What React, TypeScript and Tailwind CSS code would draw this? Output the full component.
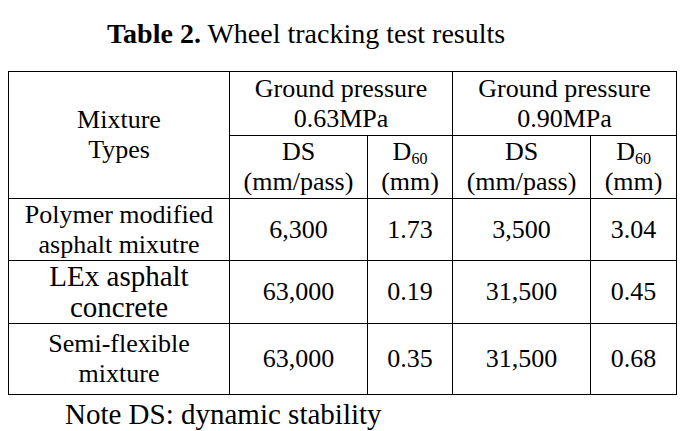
import React from "react";

const rows = [
  { name: ["Polymer modified", "asphalt mixutre"], big: false, h: "h-[62px]", v: ["6,300", "1.73", "3,500", "3.04"] },
  { name: ["LEx asphalt", "concrete"], big: true, h: "h-[61px]", v: ["63,000", "0.19", "31,500", "0.45"] },
  { name: ["Semi-flexible", "mixture"], big: false, h: "h-[71px]", v: ["63,000", "0.35", "31,500", "0.68"] },
];

const cell = "border border-black text-center align-middle p-0";

function D60() {
  return (
    <>
      D<sub className="text-[16px]">60</sub>
    </>
  );
}

export default function App() {
  return (
    <div className="w-[689px] h-[431px] bg-white text-black font-['Liberation_Serif',serif] overflow-hidden">
      <h1 className="pt-[18px] pl-[107px] text-[28px] leading-[32px] h-[71px]">
        <b>Table 2.</b> Wheel tracking test results
      </h1>
      <table className="ml-[8px] w-[668px] table-fixed text-[26px] leading-[30px]">
        <colgroup>
          <col className="w-[221px]" />
          <col className="w-[138px]" />
          <col className="w-[85px]" />
          <col className="w-[138px]" />
          <col className="w-[86px]" />
        </colgroup>
        <tbody>
          <tr className="h-[64px]">
            <td rowSpan={2} className={cell}>
              Mixture
              <br />
              Types
            </td>
            <td colSpan={2} className={cell}>
              Ground pressure
              <br />
              0.63MPa
            </td>
            <td colSpan={2} className={cell}>
              Ground pressure
              <br />
              0.90MPa
            </td>
          </tr>
          <tr className="h-[63px]">
            <td className={cell}>
              DS
              <br />
              (mm/pass)
            </td>
            <td className={cell}>
              <D60 />
              <br />
              (mm)
            </td>
            <td className={cell}>
              DS
              <br />
              (mm/pass)
            </td>
            <td className={cell}>
              <D60 />
              <br />
              (mm)
            </td>
          </tr>
          {rows.map((r) => (
            <tr key={r.name[0]} className={r.h}>
              <td className={`${cell} ${r.big ? "text-[29px] leading-[31px]" : ""}`}>
                {r.name[0]}
                <br />
                {r.name[1]}
              </td>
              {r.v.map((x, i) => (
                <td key={i} className={cell}>
                  {x}
                </td>
              ))}
            </tr>
          ))}
        </tbody>
      </table>
      <p className="pl-[65px] pt-[3px] text-[29px] leading-[32px]">Note DS: dynamic stability</p>
    </div>
  );
}
